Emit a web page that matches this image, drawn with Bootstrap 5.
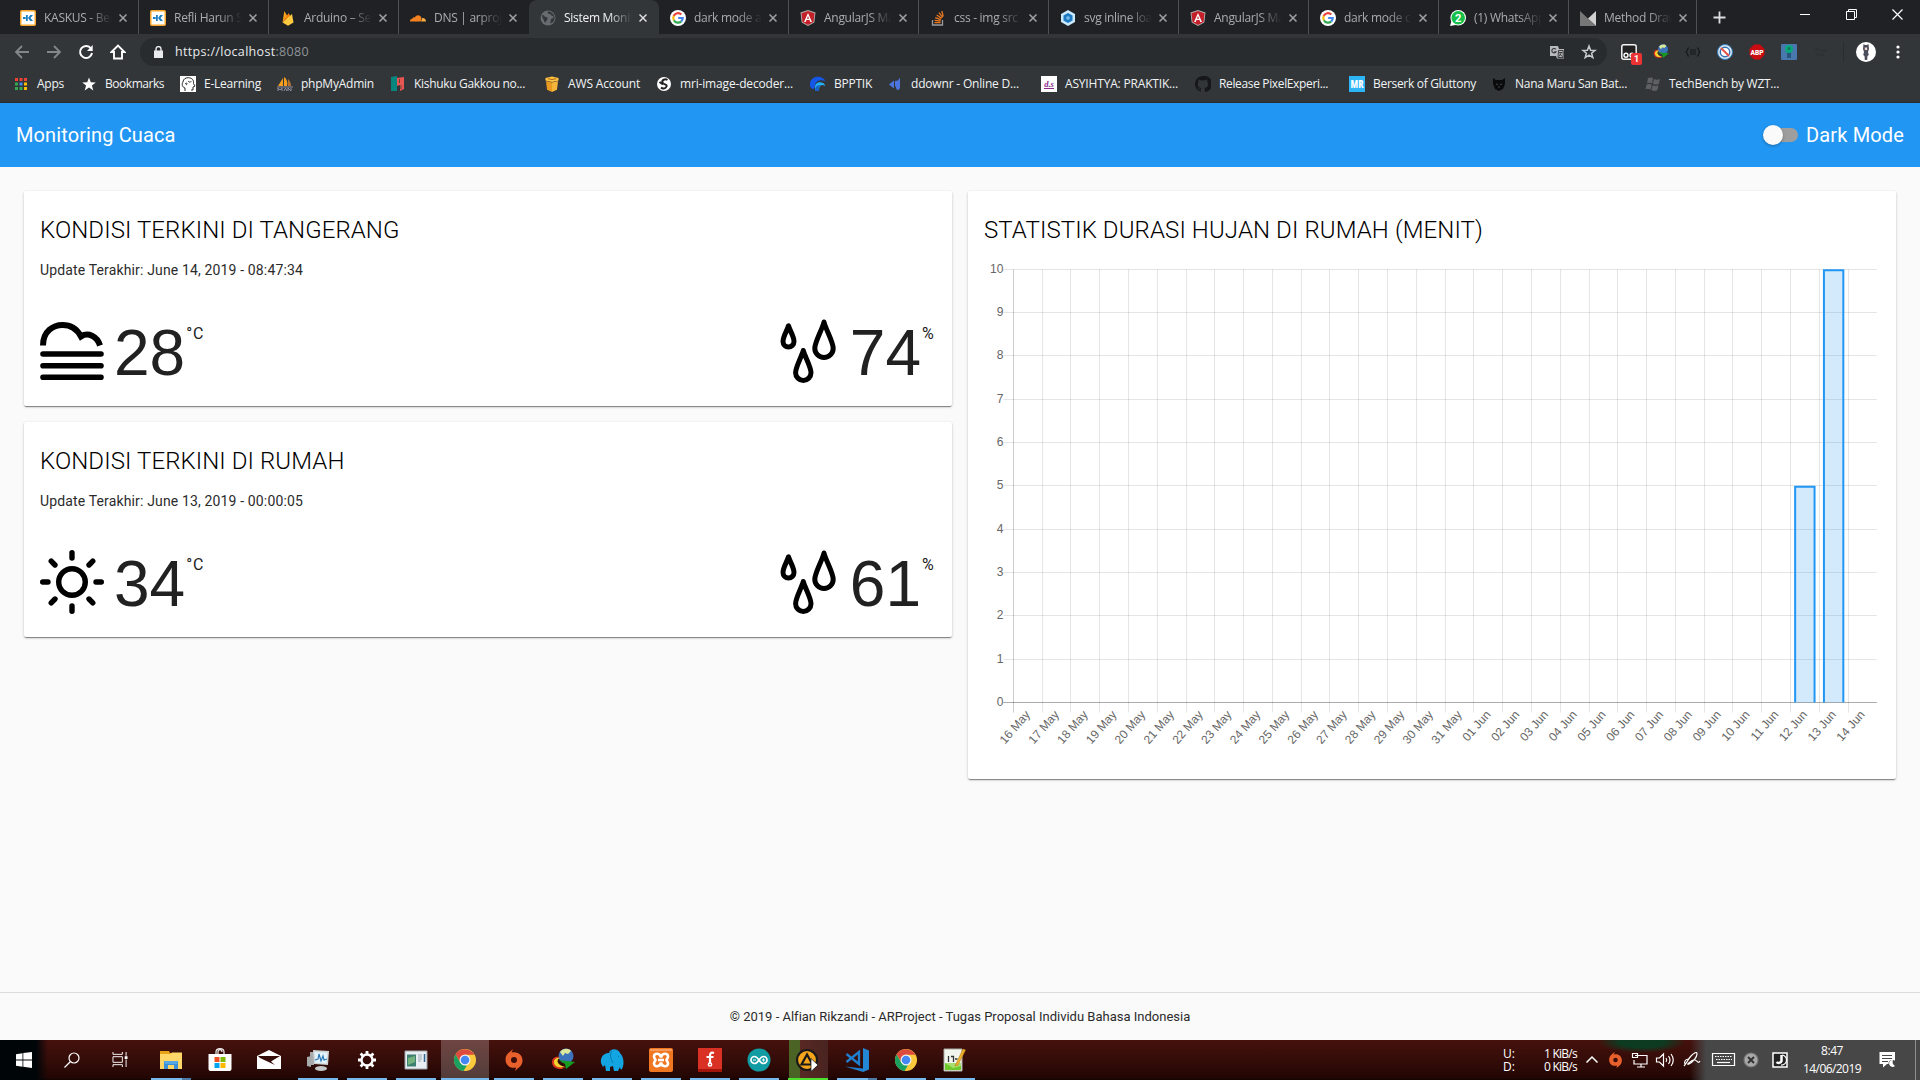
<!DOCTYPE html>
<html lang="id">
<head>
<meta charset="utf-8">
<title>Sistem Monitoring Cuaca</title>
<meta name="viewport" content="width=device-width, initial-scale=1">
<link href="https://cdn.jsdelivr.net/npm/bootstrap@5.3.0/dist/css/bootstrap.min.css" rel="stylesheet">
<style>
:root{--ui:"Open Sans","Noto Sans",sans-serif}
body{width:1920px;height:1080px;overflow:hidden;background:#fafafa;font-family:Roboto,sans-serif;color:#212121}
svg{display:block;flex:none}
.fit{white-space:nowrap;display:inline-block}
/* browser chrome */
.chrome-ui{height:103px;background:#323639;font-family:var(--ui);border-bottom:1px solid #282b2e}
.tab-strip{height:34px;background:#202124;padding-left:9px}
.tab-item{width:130px;height:34px;padding:1px 0 0 11px;font-size:12px;color:#a9acb0;border-right:1px solid #4d5054}
.tab-item:last-child{width:128px}
.tab-item.before-active{border-right-color:transparent}
.tab-item.is-active{background:#323639;color:#f1f3f4;border-right-color:transparent;border-radius:8px 8px 0 0}
.tab-title{width:68px;margin-left:8px;overflow:hidden;white-space:nowrap;letter-spacing:-.28px;line-height:18px;-webkit-mask-image:linear-gradient(90deg,#000 65%,transparent);mask-image:linear-gradient(90deg,#000 65%,transparent)}
.tab-close{margin-left:7px}
.win-btn{width:46px;height:28px}
.tool-row{height:36px}
.tool-btn{width:32px;height:28px}
.omnibox{width:1467px;height:28px;border-radius:14px;background:#282c2f;padding:0 10px 0 14px;font-size:12.5px;color:#e8eaed}
.omnibox .dimmed{color:#8f9498}
.ext-list{margin-left:6px}
.tool-sep{margin-left:6px;opacity:.5}
.more-btn{margin-left:18px}
.bookmark-row{height:28px;font-size:12px;color:#f1f3f4}
.bookmark{height:28px;padding-bottom:1px}
.bookmark .fit{margin-left:8px;line-height:18px}
.ext-count{position:absolute;left:18px;top:15px;width:11px;height:12px;background:#eb3333;color:#fff;border-radius:2px;font:700 9px/12px Roboto,sans-serif;text-align:center}
/* application */
.app-bar{height:64px;background:#2196f3;color:#fff;font-size:20px;padding:0 16px}
.toggle-track{width:34px;height:14px;border-radius:7px;background:#9e9e9e;position:relative}
.toggle-thumb{position:absolute;left:-1px;top:-3px;width:20px;height:20px;border-radius:50%;background:#fafafa;box-shadow:0 1px 3px rgba(0,0,0,.3)}
.app-main{height:825px;padding:24px 24px 0;gap:16px}
.panel{background:#fff;border-radius:2px;box-shadow:0 1px 3px 0 rgba(0,0,0,.2),0 1px 1px 0 rgba(0,0,0,.14),0 2px 1px -1px rgba(0,0,0,.3);padding:24px 16px 0}
.weather{height:215px}
.stats{height:588px}
.panel-title{font-size:24px;line-height:31px;font-weight:300;margin:0;height:31px;color:#000}
.updated{font-size:14px;line-height:20px;height:20px;margin:14px 0 39px;color:#2b2b2b}
.reading{height:64px}
.figure-num{font-family:"Liberation Sans",Arial,sans-serif;font-size:64px;line-height:64px;padding-top:2px;margin-left:10px}
.unit{font-size:16px;line-height:24px;margin:3px 0 0 1px}
.app-footer{height:48px;border-top:1px solid #dcdcdc;font-size:13px;line-height:20px;color:#2b2b2b}
/* taskbar */
.taskbar{height:40px;color:#fff;font-family:var(--ui);background:
 linear-gradient(90deg,#000508 0,#000508 36px,transparent 48px),
 linear-gradient(90deg,transparent 1690px,#474747 1706px),
 radial-gradient(ellipse 44px 11px at 1642px 2px,#0d3b22 50%,transparent 100%),
 linear-gradient(#46110d,#340c08 50%,#220603 95%,#100302)}
.task{width:49px;height:40px;position:relative}
.task.run::after{content:"";position:absolute;left:4.5px;bottom:0;width:40px;height:2px;background:#76b9ed}
.task.split::after{background:linear-gradient(90deg,#76b9ed 31px,#4d7ba5 31px)}
.task.focus{background:linear-gradient(90deg,transparent .5px,rgba(255,255,255,.22) .5px,rgba(255,255,255,.22) 48.5px,transparent 48.5px)}
.task.focus::after{left:.5px;width:48px}
.task.busy{background:linear-gradient(90deg,transparent 4.5px,#4b6426 4.5px,#4b6426 16.5px,#592824 16.5px,#482420 44.5px,transparent 44.5px)}
.task.busy::after{background:#4ee02e}
.pointer-mark{position:absolute;left:26px;top:18px}
.net{font-size:12px;line-height:13px;width:74px}
.net .fit{display:block}
.clock{font-size:12px;line-height:18px;width:62px}
</style>
<script src="https://cdn.jsdelivr.net/npm/bootstrap@5.3.0/dist/js/bootstrap.bundle.min.js"></script>
</head>
<body class="d-flex flex-column">
<svg width="0" height="0" class="position-absolute" aria-hidden="true">
<defs>
<symbol id="kaskus" viewBox="0 0 16 16"><rect x=".75" y=".75" width="14.5" height="14.5" rx="1" fill="#fff" stroke="#f5a52a" stroke-width="1.5"/><path d="M3 6.9h2.700v2.200H3zM6 5h1.800v6H6zM8 8l2.300-3H13l-2.500 3 2.500 3h-2.700z" fill="#1b7fc4"/></symbol>
<symbol id="firebase" viewBox="0 0 16 16"><path d="M2.500 12.500 4.300 1l3 5z" fill="#f8a01c"/><path d="M2.500 12.500 8.700 3l1.500 3.200z" fill="#f6820c"/><path d="M2.500 12.500 12 4l1.500 8.500L8 15.800z" fill="#fcca3f"/></symbol>
<symbol id="cloudflare" viewBox="0 0 16 16"><path d="M0 11.500c0-2 1-2.700 2.300-2.700C2.600 7.500 4 7 4.900 7.500 6 4.700 10.500 4.300 11.500 8l-.8 3.500z" fill="#f48120"/><path d="M11 11.500 12.200 8c2.500-.2 3.800 1.500 3.800 3.500z" fill="#faad3f"/></symbol>
<symbol id="globe" viewBox="0 0 16 16"><circle cx="8" cy="8" r="7.500" fill="#686c70"/><path d="M2 5c3 0 2 2 4 2s2 2 1 3-1 3-2 2.500S4 9 2.500 8zM8 1.500c-1 1.500 0 2.500 1.500 2.500S11 6 12.500 6 14 8 12 8.500 11 12 10 13.500c3-.5 5-3 4.500-6.500C14 4 11.500 1.500 8 1.500z" fill="#34383b"/></symbol>
<symbol id="google" viewBox="0 0 16 16"><circle cx="8" cy="8" r="8" fill="#fff"/><g fill="none" stroke-width="2.200"><path d="M11.300 4.500A4.700 4.700 0 0 0 3.700 6" stroke="#ea4335"/><path d="M3.700 6a4.800 4.800 0 0 0 .2 4.200" stroke="#fbbc05"/><path d="M3.900 10.200a4.700 4.700 0 0 0 7.400 1.200" stroke="#34a853"/><path d="M11.300 11.400A4.700 4.700 0 0 0 12.700 8H8.200" stroke="#4285f4"/></g></symbol>
<symbol id="angular" viewBox="0 0 16 16"><path d="M8 0l7.500 2.600-1.200 10L8 16l-6.300-3.400L.5 2.600z" fill="#b3b3b3"/><path d="M8 1l6.500 2.200-1 8.800L8 15 2.500 12l-1-8.800z" fill="#c4202a"/><path d="M8 3l4 9h-1.700l-.8-2h-3l-.8 2H4zm0 3L7 8.700h2z" fill="#fff"/></symbol>
<symbol id="stack" viewBox="0 0 16 16"><path d="M2.500 10v5h10v-5" fill="none" stroke="#9a9c9e" stroke-width="1.300"/><path d="M4.500 12.700h6M4.600 10.300l6 .7M5.200 7.700l5.700 1.900M6.700 5l5 3.400M9 2.600l3.600 4.700M11.800 1l1.400 5.500" stroke="#e87922" stroke-width="1.300"/></symbol>
<symbol id="webpack" viewBox="0 0 16 16"><path d="M8 0l7 4v8l-7 4-7-4V4z" fill="#c9e9f9"/><path d="M8 3l4.500 2.500v5L8 13l-4.500-2.500v-5z" fill="#1c78c0"/><path d="M8 6l1.800 1v2L8 10 6.200 9V7z" fill="#6fb6e4"/></symbol>
<symbol id="whatsapp" viewBox="0 0 16 16"><circle cx="8.200" cy="7.800" r="7.800" fill="#fff"/><path d="M0 16l1.500-5 4 4z" fill="#fff"/><circle cx="8.200" cy="7.800" r="6.800" fill="#16bf48"/><text x="8.200" y="12" text-anchor="middle" font-family="Roboto" font-weight="700" font-size="11" fill="#fff">2</text></symbol>
<symbol id="method" viewBox="0 0 16 16"><path d="M0 1l8 7.500L15.500 16H0z" fill="#777"/><path d="M16 1v15L8 8.500z" fill="#d0d0d0"/></symbol>
<symbol id="apps" viewBox="0 0 16 16"><path d="M2 2h3v3H2zM6.500 2h3v3h-3zM11 2h3v3h-3z" fill="#ea4335"/><path d="M2 6.500h3v3H2z" fill="#34a853"/><path d="M6.500 6.500h3v3h-3z" fill="#4285f4"/><path d="M11 6.500h3v3h-3z" fill="#fbbc05"/><path d="M2 11h3v3H2zM6.500 11h3v3h-3z" fill="#34a853"/><path d="M11 11h3v3h-3z" fill="#fbbc05"/></symbol>
<symbol id="star" viewBox="0 0 16 16"><path d="M8 1.500l1.800 4.700 5 .2-3.900 3.100 1.400 4.900L8 11.600l-4.300 2.800 1.400-4.900L1.200 6.400l5-.2z" fill="#fff"/></symbol>
<symbol id="elearn" viewBox="0 0 16 16"><rect width="16" height="16" fill="#fff"/><path d="M5 15v-3C2 11 1.500 8 3 6 3 3 6 1.500 8.500 1.700 12 2 14 4 13.500 7.500L15 10l-2 1v3h-2M5 8c2-2 3 0 1 1M8 5c2 2 3 1 3 0" fill="none" stroke="#111" stroke-width=".9"/></symbol>
<symbol id="pma" viewBox="0 0 16 16"><path d="M1 10 6 2v8zM7 10V1c3 2 4 6 3 9z" fill="#f59d1f"/><path d="M11 10V3c2 2 3 4 3 7z" fill="#b8702b"/><path d="M0 11h16M1 15v-3l2 2 2-2v3M7 15l1.500-3 1.500 3M11 15v-3l3 3v-3" stroke="#8e90a4" fill="none"/></symbol>
<symbol id="kishuku" viewBox="0 0 16 16"><path d="M1 1l6-1v15H1z" fill="#09857f"/><path d="M7 2l7-1v12l-4 2V9L7 10z" fill="#e85653"/><path d="M9.500 3v4M11 9v4" stroke="#343" stroke-width=".8"/></symbol>
<symbol id="aws" viewBox="0 0 16 16"><path d="M2 5l6 1.500V16l-5-2.300z" fill="#e89a21"/><path d="M14 5 8 6.500V16l5-2.300z" fill="#f6b43a"/><path d="M1.500 2 8 .5 14.500 2v2.500L8 6 1.500 4.500z" fill="#ffc443"/><path d="M4 2.700l4 .8 4-.8" stroke="#a86a12" fill="none"/></symbol>
<symbol id="mri" viewBox="0 0 16 16"><circle cx="8" cy="8" r="7" fill="#fff"/><path d="M11.500 4C9 2.500 5.500 4 6.500 6.500s5 1.500 4 4-4 2.500-5.500 1M3.500 6l3.500 2.500" stroke="#222" stroke-width="2" fill="none"/></symbol>
<symbol id="bpptik" viewBox="0 0 16 16"><path d="M0 9C-.5 3 5 0 10 1c3 .5 5 3 5.500 4C10 3 6 5 5 9l-1 4C1 13 0 11 0 9z" fill="#1557e8"/><path d="M5 13c-1-6 4-8 8-6 1.500.7 2 2 2 3-3-2-6-1-6 4z" fill="#23b0f6"/><path d="M5 15c0-4 2-6 5-6-1.500 2-1 5-1 6z" fill="#1763c8"/></symbol>
<symbol id="ddownr" viewBox="0 0 16 16"><path d="M13 1.500v9.500c0 2-1.500 3.500-3 3l-2-4.500V5l3-.5zM2 8.500l5-4v8z" fill="#4d75df"/></symbol>
<symbol id="ds" viewBox="0 0 16 16"><rect width="16" height="16" fill="#fff"/><text x="8" y="11" text-anchor="middle" font-family="Liberation Serif" font-weight="700" font-style="italic" font-size="8.500" fill="#8b2a8b">d.s</text><path d="M3 12.500h10" stroke="#8b2a8b"/></symbol>
<symbol id="github" viewBox="0 0 16 16"><path fill="#15171a" d="M8 0C3.600 0 0 3.600 0 8c0 3.500 2.300 6.500 5.500 7.600.4.100.5-.2.500-.4v-1.500c-2 .4-2.600-.5-2.800-1-.3-.7-1-1.300-1.100-1.400.8-.3 1.700.8 2 1.200.5.800 1.300.7 1.900.5 0-.5.200-.9.400-1.100-1.800-.2-3.600-.9-3.600-4 0-.9.300-1.600.8-2.100-.1-.300-.400-1.100.1-2.200 0 0 .700-.2 2.200.8a7.600 7.600 0 0 1 4 0c1.500-1 2.200-.8 2.200-.8.400 1.100.2 1.900.1 2.200.5.500.8 1.200.8 2.100 0 3.100-1.900 3.700-3.700 3.900.3.300.6.700.6 1.500v2.200c0 .2.200.5.600.4A8 8 0 0 0 8 0z"/></symbol>
<symbol id="mr" viewBox="0 0 16 16"><rect width="16" height="16" fill="#2db5f5"/><text x="8" y="12" text-anchor="middle" textLength="13" lengthAdjust="spacingAndGlyphs" font-family="Open Sans" font-weight="800" font-size="10" fill="#fff">MR</text></symbol>
<symbol id="bear" viewBox="0 0 16 16"><path d="M2 2l3 2h6l3-2v6l-2 5-4 2-4-2-2-5z" fill="#0a0b0c"/><path d="M5 8l2 .5M11 8l-2 .5M7 11h2" stroke="#555" stroke-width=".8"/></symbol>
<symbol id="tech" viewBox="0 0 16 16"><path d="M3 2c2-1 4-.5 5 .5L7 7.500C5 6.500 4 6.500 2 7.200zM9 3c2 1 4 1 6 0l-1.200 5c-2 1-4 .6-6-.3zM1.600 8.500c2-1 4-.5 5 .5l-1 4.500c-2-1-3-1-5-.3zM7.500 9.300c2 1 4 1 6 0l-1.200 5c-2 1-4 .6-6-.3z" fill="#5e6062"/></symbol>
<symbol id="translate" viewBox="0 0 16 16"><path d="M1 2h8l1 3h5v9.500H8L7 12H1z" fill="#b7babd"/><path d="M6.800 5.300a2.200 2.200 0 1 0 .2 2.400H5.300" fill="none" stroke="#333" stroke-width="1.100"/><path d="M9.500 6.500h4.700v7H9zM10 8.500h3.500M12.500 8.500l-2.500 4M10.500 10l3 2.500" fill="none" stroke="#333" stroke-width=".9"/></symbol>
<symbol id="starline" viewBox="0 0 16 16"><path d="M8 2l1.600 4.200 4.500.2-3.500 2.800 1.200 4.400L8 11.200l-3.800 2.400 1.200-4.400-3.500-2.800 4.500-.2z" fill="none" stroke="#c8cbce" stroke-width="1.500"/></symbol>
<symbol id="tamper" viewBox="0 0 16 16"><rect x=".8" y=".8" width="14.400" height="14.400" rx="2" fill="#222" stroke="#f5f5f5" stroke-width="1.500"/><circle cx="5" cy="11.300" r="2" fill="none" stroke="#fff" stroke-width="1.400"/><circle cx="11" cy="11.300" r="2" fill="none" stroke="#fff" stroke-width="1.400"/></symbol>
<symbol id="idm" viewBox="0 0 24 24"><circle cx="15" cy="8" r="7.500" fill="#3c73bd"/><path d="M9 4c3-4 9-4 11-1l-3 3-3-1-2 3z" fill="#dce99b"/><path d="M1 14c0-5 5-6 8-5-4 1-5 4-3 7s7 4 9 3c-5 4-14 2-14-5z" fill="#db3522"/><path d="M3 13c1-3 4-4 6-3-3 1-3 4-1 6s5 3 7 2c-5 3-13 1-12-5z" fill="#f3d32d"/><path d="M8 12c5 1 11 1 16 2l-9 7-1-5z" fill="#169a20"/></symbol>
<symbol id="braces" viewBox="0 0 16 16"><path d="M4 4H3L2 7 1 8l1 1 1 3h1M12 4h1l1 3 1 1-1 1-1 3h-1M5 6h6M5 8h6M5 10h6" stroke="#17191b" stroke-width="1.200" fill="none"/></symbol>
<symbol id="block" viewBox="0 0 16 16"><circle cx="8" cy="8" r="7.500" fill="#d7e6f2" stroke="#357dba"/><circle cx="8" cy="8" r="4.700" fill="#fff" stroke="#3170b4" stroke-width="1.400"/><path d="M4 4l8 8" stroke="#e15248" stroke-width="2"/></symbol>
<symbol id="abp" viewBox="0 0 16 16"><path d="M5 .5h6L15.500 5v6L11 15.500H5L.5 11V5z" fill="#c90c12"/><text x="8" y="10.700" text-anchor="middle" textLength="13" lengthAdjust="spacingAndGlyphs" font-family="Roboto" font-weight="900" font-size="7.500" fill="#fff">ABP</text></symbol>
<symbol id="pin" viewBox="0 0 16 16"><rect width="16" height="16" rx="1" fill="#4878ad"/><path d="M6 7h4v7H6z" fill="#27567a"/><circle cx="8" cy="5" r="4" fill="#0aa77d"/><circle cx="8" cy="4.500" r="1.500" fill="#077a60"/></symbol>
<symbol id="ghost" viewBox="0 0 16 16"><path d="M2 4h5v3H2zM8 5h6v3H8zM3 9h8v3H3z" fill="#2f3235"/></symbol>
<symbol id="avatar" viewBox="0 0 20 20"><circle cx="10" cy="10" r="10" fill="#fff"/><path d="M7.500 2l1.500 1h2l1.500-1 .5 5-1 3 .8 3-1.300 1-.3 4h-2.400L8.500 14l-1.300-1L8 10 7 7z" fill="#4b4d5b"/><path d="M8.800 5.500h2.400V8H8.800z" fill="#efd9d1"/></symbol>
<symbol id="chrome" viewBox="0 0 24 24"><circle cx="12" cy="12" r="11" fill="#fbc93c"/><path d="M2.500 6.500A11 11 0 0 1 21.500 6.700H12L7.500 14.600z" fill="#dd4b3e"/><path d="M2.500 6.500l4.900 8.300 4.600 2.500 2-.1L10.500 23A11 11 0 0 1 2.500 6.500z" fill="#1aa15f"/><circle cx="12" cy="12" r="5.500" fill="#f1f1f1"/><circle cx="12" cy="12" r="4.300" fill="#4587f3"/></symbol>
<symbol id="win" viewBox="0 0 16 16"><path d="M0 2.200l6.500-1v6.300H0zM7.300 1.100 16 0v7.500H7.300zM0 8.400h6.500v6.400L0 13.800zM7.300 8.400H16V16l-8.700-1.200z" fill="#fff"/></symbol>
<symbol id="search" viewBox="0 0 16 16"><circle cx="10" cy="6" r="5" fill="none" stroke="#fff" stroke-width="1.200"/><path d="M6.500 9.500.5 15.500" stroke="#fff" stroke-width="1.200"/></symbol>
<symbol id="taskview" viewBox="0 0 16 16"><path d="M.5 0v2.500h10V0M.5 16v-2.500h10V16M.5 5h10v6H.5zM14.500 0v4M14.500 8v8" stroke="#fff" fill="none"/><path d="M13 4.500h3v3h-3z" fill="#fff"/></symbol>
<symbol id="folder" viewBox="0 0 24 24"><path d="M1 3h9l1 2h12v16H1z" fill="#e7a317"/><path d="M1 6h10l2-1.500h10V21H1z" fill="#ffd768"/><path d="M5 13h14v8h-4v-4H9v4H5z" fill="#3b8fd6"/><path d="M5 13h14l-1 3H6z" fill="#56a7e6"/></symbol>
<symbol id="store" viewBox="0 0 24 24"><path d="M8 6V4c0-4.500 8-4.500 8 0v2M10 6V4c0-3 4-3 4 0" fill="none" stroke="#eee" stroke-width="1.200"/><path d="M.5 6h23v15a2 2 0 0 1-2 2h-19a2 2 0 0 1-2-2z" fill="#fff"/><path d="M6.500 9h5v5h-5z" fill="#f25022"/><path d="M12.500 9h5v5h-5z" fill="#7fba00"/><path d="M6.500 15h5v5h-5z" fill="#00a4ef"/><path d="M12.500 15h5v5h-5z" fill="#ffb900"/></symbol>
<symbol id="mail" viewBox="0 0 24 24"><path d="M0 8l12-6 12 6v13H0z" fill="#fff"/><path d="M1 8h22l-9 5.500 4 3.500L3 10z" fill="#340c08"/></symbol>
<symbol id="perf" viewBox="0 0 24 24"><path d="M1 9l4-1v11l-4-1zM4 4h4v13H4z" fill="#a6aaaa"/><path d="M7 2l16 1-1 14-14-1z" fill="#cfd4d4"/><path d="M8.500 4l13 .8-1 10.700-11-.8z" fill="#e3f3fb"/><path d="M9 12l3-1 1-5 2 7 2-5 1 4 3-1" fill="none" stroke="#2a79b8" stroke-width="1.200"/><ellipse cx="15" cy="20.500" rx="6" ry="2.500" fill="#c5c8c8"/></symbol>
<symbol id="gear" viewBox="0 0 20 20"><circle cx="10" cy="10" r="5.500" fill="none" stroke="#fff" stroke-width="2.400"/><path d="M10 1v3M10 16v3M1 10h3M16 10h3M3.600 3.600l2.200 2.200M14.200 14.200l2.200 2.200M16.400 3.600l-2.200 2.200M5.800 14.200l-2.200 2.200" stroke="#fff" stroke-width="2.800"/></symbol>
<symbol id="appwin" viewBox="0 0 24 24"><path d="M1 3h22v18H1z" fill="#e9eef3" stroke="#9ba3aa"/><path d="M3 6.500h9v12H3z" fill="#3e7f73"/><path d="M4 10l7-2v6l-7 3z" fill="#73b17d"/><path d="M14 7h4M14 9h4M14 11h4M14 13h3" stroke="#99aab5"/><path d="M20.500 6v8" stroke="#2d6593" stroke-width="1.500"/></symbol>
<symbol id="origin" viewBox="0 0 24 24"><path d="M11 1 9.500 4.500C16 3 20.500 7 20.500 12.500 20.500 18 16 20 13 23l1.200-3.500C8 21 3.500 17 3.500 11.500 3.500 6 8 4 11 1z" fill="#e8602c"/><circle cx="12" cy="12" r="3" fill="#3a0e0b"/></symbol>
<symbol id="mamp" viewBox="0 0 24 24"><path d="M1 15C0 8 5 5 9 5c1-5 9-5 11 0 4 4 4.500 11 2 16-1 1-2 0-2-2l-2 4h-4l-1-5-3 1v4H6l-1-6-2 2z" fill="#12a5e2"/><path d="M12 3c-3 3-1 8 1 12M18 8l1 1" stroke="#0878ac" fill="none"/></symbol>
<symbol id="xampp" viewBox="0 0 24 24"><rect width="24" height="24" rx="2" fill="#f07721"/><path d="M1 1h22v2H1z" fill="#fa9c5b"/><path d="M12 9.500C11.500 5 5 4.500 5 8.500c0 2 1.500 2.500 1.500 3.500S5 13.500 5 15.500c0 4 6.500 3.500 7-1 .5 4.500 7 5 7 1 0-2-1.500-2.500-1.500-3.500S19 10.500 19 8.500c0-4-6.500-3.500-7 1z" fill="none" stroke="#fff" stroke-width="2.600"/><path d="M9 12h6" stroke="#fff" stroke-width="2.600"/></symbol>
<symbol id="flash" viewBox="0 0 24 24"><rect width="24" height="24" fill="#d93224"/><path d="M0 21h24v3H0z" fill="#a4160c"/><path d="M16 5c-3-1-4 0-4 3v7M8.500 9h7" fill="none" stroke="#fff" stroke-width="2.200"/><circle cx="12" cy="16.500" r="1.600" fill="none" stroke="#fff" stroke-width="1.500"/></symbol>
<symbol id="arduino" viewBox="0 0 24 24"><circle cx="12" cy="12" r="11.500" fill="#119ba2"/><path d="M12 12c-2-3-3-3.500-4.500-3.500a3.500 3.500 0 0 0 0 7C9 15.500 10 15 12 12s3-3.500 4.500-3.500a3.500 3.500 0 0 1 0 7C15 15.500 14 15 12 12z" fill="none" stroke="#fff" stroke-width="1.700"/><path d="M6 12h3M15 12h3M16.500 10.500v3" stroke="#fff"/></symbol>
<symbol id="aimp" viewBox="0 0 24 24"><circle cx="11" cy="12" r="10" fill="#f4a51c" stroke="#191919" stroke-width="2.200"/><path d="M11 6.500l-5.500 10h11z" fill="none" stroke="#191919" stroke-width="2.200"/></symbol>
<symbol id="vscode" viewBox="0 0 24 24"><path d="M18 0l6 2.500v19L18 24z" fill="#2487d5"/><path d="M0 18.500l18 2V24z" fill="#1f7fce"/><path d="M1.500 6 14 16V4L1.500 14" fill="none" stroke="#1f7fce" stroke-width="2.300"/></symbol>
<symbol id="notepad" viewBox="0 0 24 24"><path d="M1 1h18v22H1z" fill="#f2f4ee" stroke="#a9ada4"/><path d="M2 15h16v7H2z" fill="#6eca2b"/><path d="M2 15h16v3L10 20z" fill="#a6df6f"/><path d="M5.500 8v6M8 8.500h2.500V14M12 11h2.500" stroke="#333" stroke-width="1.300" fill="none"/><path d="M12 18 20 1l2.500 1-7.500 15z" fill="#efb22b" stroke="#b97b18" stroke-width=".6"/></symbol>
<symbol id="cloud-fog" viewBox="0 0 64 64"><path d="M3 26.500C3 12 13.500 6 22.500 6 31 6 37 10 41 17.500 48 13 57 17 60 26.500" fill="none" stroke="#000" stroke-width="6"/><path d="M3 35h58M3 46.700h58M3 58.300h58" stroke="#000" stroke-width="5.600" stroke-linecap="round"/></symbol>
<symbol id="sunny" viewBox="0 0 64 64"><g fill="none" stroke="#000" stroke-width="5.400" stroke-linecap="round"><circle cx="32" cy="32" r="13.300"/><path d="M32 2.700V8M32 56v5.300M2.700 32H8M56 32h5.300M11.200 11.200l3.800 3.800M49 49l3.800 3.800M52.800 11.200 49 15M15 49l-3.800 3.800"/></g></symbol>
<symbol id="drops" viewBox="0 0 64 64"><g fill="none" stroke="#000" stroke-width="5" stroke-linejoin="round"><path d="M12.500 6.800C11 12 7 17.500 7 22.500a5.500 5.500 0 0 0 11 0C18 17.500 14 12 12.500 6.800z"/><path d="M48 3C46 11 38.800 23 38.800 29.300a9.200 9.200 0 0 0 18.400 0C57.200 23 50 11 48 3z"/><path d="M27.300 31.500C25.500 38 19.600 48 19.600 53.700a7.700 7.700 0 0 0 15.400 0C35 48 29 38 27.300 31.500z"/></g></symbol>
</defs>
</svg>

<header class="chrome-ui flex-shrink-0">
 <div class="tab-strip d-flex">
  <div id="tabs" class="d-flex"></div>
  <div class="d-flex align-items-center ps-3"><svg width="13" height="33" viewBox="0 0 13 33"><path d="M6.500 10.500v12M.5 16.500h12" stroke="#dcdee0" stroke-width="1.800"/></svg></div>
  <div class="ms-auto d-flex">
   <div class="win-btn d-flex align-items-center justify-content-center"><svg width="10" height="10"><path d="M0 5.500h10" stroke="#fff"/></svg></div>
   <div class="win-btn d-flex align-items-center justify-content-center"><svg width="11" height="11"><path d="M.5 2.500h8v8h-8zM2.500 2.500v-2h8v8h-2" fill="none" stroke="#fff"/></svg></div>
   <div class="win-btn d-flex align-items-center justify-content-center"><svg width="11" height="11"><path d="M.5.5l10 10M10.500.5l-10 10" stroke="#fff" stroke-width="1.200"/></svg></div>
  </div>
 </div>
 <div class="tool-row d-flex align-items-center ps-1 pe-1">
  <div class="d-flex">
   <div class="tool-btn d-flex align-items-center justify-content-center ps-1"><svg width="16" height="16"><path d="M15 8H2M8 2 2 8l6 6" fill="none" stroke="#84878a" stroke-width="1.800"/></svg></div>
   <div class="tool-btn d-flex align-items-center justify-content-center ps-1"><svg width="16" height="16"><path d="M1 8h13M8 2l6 6-6 6" fill="none" stroke="#84878a" stroke-width="1.800"/></svg></div>
   <div class="tool-btn d-flex align-items-center justify-content-center ps-1"><svg width="16" height="16"><path d="M13 4.500A6 6 0 1 0 14 9" fill="none" stroke="#fff" stroke-width="2"/><path d="M14.700 1v6H9z" fill="#fff"/></svg></div>
   <div class="tool-btn d-flex align-items-center justify-content-center ps-1"><svg width="16" height="16"><path d="M1.500 8 8 1.500 14.500 8H12v6.500H4V8z" fill="none" stroke="#fff" stroke-width="1.900"/></svg></div>
  </div>
  <div class="omnibox d-flex align-items-center ms-2">
   <svg width="9" height="12" viewBox="0 0 9 12"><path d="M0 4.500h9V12H0z" fill="#e8eaed"/><path d="M2 5V3a2.500 2.500 0 0 1 5 0v2" fill="none" stroke="#e8eaed" stroke-width="1.400"/></svg>
   <span class="fit ms-2 ps-1" data-w="134">https://localhost<span class="dimmed">:8080</span></span>
   <div class="ms-auto d-flex gap-3"><svg width="16" height="16"><use href="#translate"/></svg><svg width="16" height="16"><use href="#starline"/></svg></div>
  </div>
  <div id="extensions" class="ext-list d-flex"></div>
  <div class="tool-sep vr my-2"></div>
  <svg class="ms-2 ps-1" width="26" height="20"><use href="#avatar" width="20" height="20"/></svg>
  <svg class="more-btn" width="4" height="16"><circle cx="2" cy="3" r="1.600" fill="#fff"/><circle cx="2" cy="8" r="1.600" fill="#fff"/><circle cx="2" cy="13" r="1.600" fill="#fff"/></svg>
 </div>
 <nav id="bookmarks" class="bookmark-row d-flex"></nav>
</header>

<div class="app-bar d-flex align-items-center justify-content-between flex-shrink-0">
 <span class="fit" data-w="159.500">Monitoring Cuaca</span>
 <div class="d-flex align-items-center"><div class="toggle-track me-2"><div class="toggle-thumb"></div></div><span class="fit" data-w="98">Dark Mode</span></div>
</div>

<main class="app-main d-flex flex-shrink-0">
 <div class="d-flex flex-column gap-3 flex-fill w-50">
  <section class="panel weather">
   <h2 class="panel-title"><span class="fit" data-w="359.500">KONDISI TERKINI DI TANGERANG</span></h2>
   <p class="updated"><span class="fit" data-w="263">Update Terakhir: June 14, 2019 - 08:47:34</span></p>
   <div class="reading d-flex justify-content-between">
    <div class="d-flex"><svg width="64" height="64"><use href="#cloud-fog"/></svg><span class="figure-num">28</span><span class="unit fit" data-w="18">°C</span></div>
    <div class="d-flex"><svg width="64" height="64"><use href="#drops"/></svg><span class="figure-num">74</span><span class="unit fit" data-w="14">%</span></div>
   </div>
  </section>
  <section class="panel weather">
   <h2 class="panel-title"><span class="fit" data-w="304.500">KONDISI TERKINI DI RUMAH</span></h2>
   <p class="updated"><span class="fit" data-w="263">Update Terakhir: June 13, 2019 - 00:00:05</span></p>
   <div class="reading d-flex justify-content-between">
    <div class="d-flex"><svg width="64" height="64"><use href="#sunny"/></svg><span class="figure-num">34</span><span class="unit fit" data-w="18">°C</span></div>
    <div class="d-flex"><svg width="64" height="64"><use href="#drops"/></svg><span class="figure-num">61</span><span class="unit fit" data-w="14">%</span></div>
   </div>
  </section>
 </div>
 <div class="flex-fill w-50">
  <section class="panel stats">
   <h2 class="panel-title"><span class="fit" data-w="499">STATISTIK DURASI HUJAN DI RUMAH (MENIT)</span></h2>
   <svg id="chart" width="896" height="510" font-family="'Liberation Sans',Arial,sans-serif" font-size="12" fill="#666"></svg>
  </section>
 </div>
</main>

<footer class="app-footer d-flex align-items-center justify-content-center flex-shrink-0"><span class="fit" data-w="460">© 2019 - Alfian Rikzandi - ARProject - Tugas Proposal Individu Bahasa Indonesia</span></footer>

<div class="taskbar d-flex flex-shrink-0">
 <div class="d-flex align-items-center">
  <svg width="48" height="40"><use href="#win" x="16" y="12" width="16" height="16"/></svg>
  <svg width="48" height="40"><use href="#search" x="16" y="12" width="16" height="16"/></svg>
  <svg width="50.500" height="40"><use href="#taskview" x="16" y="12" width="16" height="15"/></svg>
 </div>
 <div id="tasks" class="d-flex"></div>
 <div class="ms-auto d-flex align-items-center">
  <div class="net d-flex justify-content-between me-2"><div>U:<br>D:</div><div class="text-end"><span class="fit" data-w="33">1 KiB/s</span><span class="fit" data-w="33">0 KiB/s</span></div></div>
  <svg width="216" height="40" fill="none" stroke="#fff" stroke-width="1.200">
   <path d="M1.500 22.500 7 17l5.500 5.500" stroke-width="1.500"/>
   <use href="#origin" x="21.500" y="11" width="18" height="18" stroke="none"/>
   <path d="M50 15.500h12v8.500H49v-4M56 24v3M52 27h8M47.500 13.500h5v4h-5z"/>
   <path d="M71.500 18h3l4-4v12l-4-4h-3zM81 18q1.500 2 0 4M83.500 16q3 4 0 8M86 14q4.500 6 0 12"/>
   <path d="M99 26c3-3 4-7 7-10s6-5 6-2-4 8-8 10 3-5 6-4 3 4 5 1M104 19c-4 0-5 3-4 5"/>
   <path d="M127.500 13.500h22v12h-22z"/><path d="M130 16.500h17M131 19.500h16" stroke-dasharray="1.500 1"/><path d="M132 22.500h13"/>
   <circle cx="166" cy="20" r="7" fill="#a8a8a8" stroke="#777"/><path d="M163 17l6 6M169 17l-6 6" stroke="#333" stroke-width="2"/>
   <path d="M188 13h14v14h-14z" fill="#222" stroke-width="1.500"/><path d="M196.500 15v6a3 3 0 0 1-5 1" stroke-width="2.500"/><path d="M197 15a5 5 0 0 1-1 10"/>
  </svg>
  <div class="clock text-center"><span class="fit" data-w="22">8:47</span><br><span class="fit" data-w="58">14/06/2019</span></div>
  <svg class="ms-3" width="36" height="40"><path d="M.5 12h15.500v12H8l-4 3.500V24H.500z" fill="#fff"/><path d="M3 15.500h10M3 18.500h10M3 21.500h6" stroke="#474747"/><circle cx="13.500" cy="24" r="4" fill="#474747"/><path d="M14 20a3.500 3.500 0 1 0 2 6 5 5 0 0 1-2-6z" fill="#fff"/></svg>
  <svg width="5" height="40"><path d="M.5 0v40" stroke="#8d8d8d"/></svg>
 </div>
</div>

<script>
const icon=(id,s=16)=>`<svg width="${s}" height="${s}"><use href="#${id}"/></svg>`;
const tabs=[['kaskus','KASKUS - Berb'],['kaskus','Refli Harun Se'],['firebase','Arduino – Sen'],['cloudflare','DNS | arproject'],['globe','Sistem Monito'],['google','dark mode an'],['angular','AngularJS Mat'],['stack','css - img src s'],['webpack','svg inline load'],['angular','AngularJS Mat'],['google','dark mode cs'],['whatsapp','(1) WhatsApp'],['method','Method Draw']];
document.getElementById('tabs').innerHTML=tabs.map(([i,t],k)=>`<div class="tab-item d-flex align-items-center ${k==4?'is-active':k==3?'before-active':''}">${icon(i)}<span class="tab-title">${t}</span><svg class="tab-close" width="8" height="8"><path d="M.5.5l7 7M7.500.5l-7 7" stroke="${k==4?'#dcdee0':'#a0a3a6'}" stroke-width="1.500"/></svg></div>`).join('');

/* icon, label, offset of the icon, width of the label */
const marks=[['apps','Apps',13,27],['star','Bookmarks',81,59],['elearn','E-Learning',180,57],['pma','phpMyAdmin',277,73],['kishuku','Kishuku Gakkou no...',390,111],['aws','AWS Account',544,72],['mri','mri-image-decoder...',656,113],['bpptik','BPPTIK',810,38],['ddownr','ddownr - Online D...',887,108],['ds','ASYIHTYA: PRAKTIK...',1041,113],['github','Release PixelExperi...',1195,109],['mr','Berserk of Gluttony',1349,103],['bear','Nana Maru San Bat...',1491,112],['tech','TechBench by WZT...',1645,110]];
document.getElementById('bookmarks').innerHTML=marks.map(([i,t,x,w],k)=>{
 const before=k?x-(marks[k-1][2]+24+marks[k-1][3]):x;
 return `<div class="bookmark d-flex align-items-center" style="margin-left:${before}px">${icon(i)}<span class="fit" data-w="${w}">${t}</span></div>`}).join('');

document.getElementById('extensions').innerHTML=['tamper','idm','braces','block','abp','pin','ghost'].map((i,k)=>`<div class="tool-btn d-flex align-items-center justify-content-center position-relative">${icon(i)}${k?'':'<span class="ext-count">1</span>'}</div>`).join('');

const tasks=[['folder','run split'],['store',''],['mail',''],['perf','run'],['gear','run',20],['appwin','run'],['chrome','run focus'],['origin','run'],['idm','run'],['mamp','run'],['xampp','run'],['flash','run'],['arduino','run'],['aimp','run busy'],['vscode','run split'],['chrome','run'],['notepad','run']];
document.getElementById('tasks').innerHTML=tasks.map(([i,c,s])=>`<div class="task ${c} d-flex align-items-center justify-content-center">${icon(i,s||24)}${i=='aimp'?'<svg class="pointer-mark" width="10" height="15"><path d="M1 .5v13l7-6.500z" fill="#fff" stroke="#111" stroke-width=".7"/></svg>':''}</div>`).join('');

/* rain duration chart */
const days=[];
for(let d=16;d<=31;d++)days.push(d+' May');
for(let d=1;d<=14;d++)days.push(String(d).padStart(2,'0')+' Jun');
const rain={'12 Jun':5,'13 Jun':10};
const X0=29.4,Y0=456.3,H=433,STEP=28.78,W=STEP*30;
const crisp=v=>Math.floor(v)+.5;
const base=crisp(Y0);
let out='';
for(let v=0;v<=10;v++){
 const y=crisp(Y0-H*v/10);
 out+=`<path d="M${X0-10} ${y}H${X0+W}" stroke="${v?'rgba(0,0,0,.1)':'rgba(0,0,0,.33)'}"/><text x="${X0-10}" y="${y+3}" text-anchor="end">${v}</text>`;
}
days.forEach((d,i)=>{
 const x=crisp(X0+i*STEP),cx=X0+(i+.5)*STEP;
 out+=`<path d="M${x} ${base-H}V${base+10}" stroke="rgba(0,0,0,${i?.1:.2})"/><text transform="translate(${cx} ${Y0+10}) rotate(-49)" text-anchor="end" y="4">${d}</text>`;
 if(rain[d]){const h=H*rain[d]/10,l=cx-9.7,r=cx+9.7,t=Y0-h+1;
  out+=`<path d="M${l} ${base}V${t}H${r}V${base}" fill="rgba(33,150,243,.2)" stroke="#2196f3" stroke-width="2"/>`;}
});
document.getElementById('chart').innerHTML=out;

document.querySelectorAll('.fit[data-w]').forEach(e=>{
 const r=document.createRange();r.selectNodeContents(e);
 const w=[...r.getClientRects()].length?r.getBoundingClientRect().width:0;
 const inner=e.closest('.net')?measure(e):w;
 e.style.letterSpacing=((e.dataset.w-inner)/e.textContent.length).toFixed(3)+'px';
});
function measure(e){
 const c=document.createElement('canvas').getContext('2d'),s=getComputedStyle(e);
 c.font=`${s.fontSize} ${s.fontFamily}`;
 return c.measureText(e.textContent).width;
}
</script>
</body>
</html>
